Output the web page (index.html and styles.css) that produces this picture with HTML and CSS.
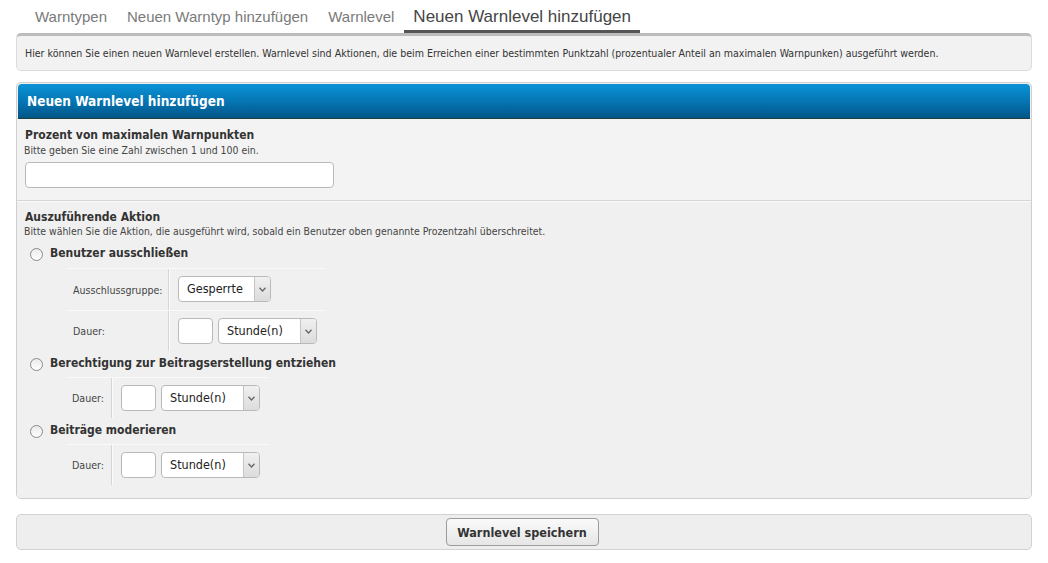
FILE: index.html
```html
<!DOCTYPE html>
<html lang="de">
<head>
<meta charset="utf-8">
<title>Neuen Warnlevel hinzufügen</title>
<link rel="stylesheet" href="styles.css">
</head>
<body>
<div class="page">
  <nav class="tabs">
    <a class="tab">Warntypen</a>
    <a class="tab">Neuen Warntyp hinzufügen</a>
    <a class="tab">Warnlevel</a>
    <a class="tab active">Neuen Warnlevel hinzufügen</a>
  </nav>
  <div class="info">Hier können Sie einen neuen Warnlevel erstellen. Warnlevel sind Aktionen, die beim Erreichen einer bestimmten Punktzahl (prozentualer Anteil an maximalen Warnpunken) ausgeführt werden.</div>

  <div class="container">
    <div class="head">Neuen Warnlevel hinzufügen</div>
    <div class="section first">
      <div class="title">Prozent von maximalen Warnpunkten</div>
      <div class="desc">Bitte geben Sie eine Zahl zwischen 1 und 100 ein.</div>
      <div class="textinput wide"></div>
    </div>
    <div class="section second">
      <div class="title">Auszuführende Aktion</div>
      <div class="desc">Bitte wählen Sie die Aktion, die ausgeführt wird, sobald ein Benutzer oben genannte Prozentzahl überschreitet.</div>

      <div class="option"><span class="radio"></span><span class="olabel">Benutzer ausschließen</span></div>
      <div class="sub t1">
        <div class="row">
          <div class="lcell">Ausschlussgruppe:</div>
          <div class="ccell"><div class="select s-gr"><span class="val">Gesperrte</span><span class="arrow"><svg width="7" height="5" viewBox="0 0 7 5"><path d="M0.5 0.8 L3.5 4 L6.5 0.8" fill="none" stroke="#666" stroke-width="1.3"/></svg></span></div></div>
        </div>
        <div class="row">
          <div class="lcell">Dauer:</div>
          <div class="ccell"><div class="textinput small"></div><div class="select s-st"><span class="val">Stunde(n)</span><span class="arrow"><svg width="7" height="5" viewBox="0 0 7 5"><path d="M0.5 0.8 L3.5 4 L6.5 0.8" fill="none" stroke="#666" stroke-width="1.3"/></svg></span></div></div>
        </div>
      </div>

      <div class="option"><span class="radio"></span><span class="olabel">Berechtigung zur Beitragserstellung entziehen</span></div>
      <div class="sub t2">
        <div class="row">
          <div class="lcell r">Dauer:</div>
          <div class="ccell"><div class="textinput small"></div><div class="select s-st"><span class="val">Stunde(n)</span><span class="arrow"><svg width="7" height="5" viewBox="0 0 7 5"><path d="M0.5 0.8 L3.5 4 L6.5 0.8" fill="none" stroke="#666" stroke-width="1.3"/></svg></span></div></div>
        </div>
      </div>

      <div class="option"><span class="radio"></span><span class="olabel">Beiträge moderieren</span></div>
      <div class="sub t2">
        <div class="row">
          <div class="lcell r">Dauer:</div>
          <div class="ccell"><div class="textinput small"></div><div class="select s-st"><span class="val">Stunde(n)</span><span class="arrow"><svg width="7" height="5" viewBox="0 0 7 5"><path d="M0.5 0.8 L3.5 4 L6.5 0.8" fill="none" stroke="#666" stroke-width="1.3"/></svg></span></div></div>
        </div>
      </div>
    </div>
  </div>

  <div class="submitbar">
    <button class="button">Warnlevel speichern</button>
  </div>
</div>
</body>
</html>
```
FILE: styles.css
```css
html, body {
  margin: 0;
  padding: 0;
  background: #fff;
}
body {
  font-family: "DejaVu Sans Condensed", "DejaVu Sans", sans-serif;
  color: #333;
}
.page {
  padding: 0 16px;
}
.tabs {
  display: flex;
  padding-left: 9px;
  height: 33px;
  align-items: flex-start;
  position: relative;
  z-index: 1;
}
.tab {
  font-family: "Liberation Sans", sans-serif;
  font-size: 15px;
  color: #7a7a7a;
  padding: 8px 10px 0;
  height: 25px;
  line-height: 18px;
}
.tab.active {
  font-size: 17px;
  color: #454545;
  padding: 7px 9px 0;
  height: 23px;
  line-height: 20px;
  border-bottom: 3px solid #555;
}
.info {
  background: #f2f2f2;
  border: 1px solid #dcdcdc;
  border-top: 3px solid #bcbcbc;
  border-radius: 5px;
  height: 34px;
  line-height: 35px;
  padding: 0 8px;
  font-size: 10.55px;
  color: #333;
}
.container {
  margin-top: 11px;
  border: 1px solid #cfcfcf;
  border-radius: 5px;
  background: #f0f0f0;
  overflow: hidden;
}
.head {
  margin: 1px 1px 0;
  height: 34px;
  line-height: 34px;
  padding-left: 9px;
  border-radius: 4px 4px 0 0;
  background: linear-gradient(#0a93d8, #0576b4 50%, #025688);
  border-bottom: 1px solid #1f3d3a;
  color: #fff;
  font-family: "DejaVu Sans Condensed", "DejaVu Sans", sans-serif;
  font-weight: bold;
  font-size: 13.5px;
}
.section {
  padding: 0 8px;
}
.section.first {
  background: #f3f3f3;
  padding-top: 8px;
  padding-bottom: 12px;
  border-bottom: 1px solid #d6d6d6;
}
.section.second {
  background: #f0f0f0;
  padding-top: 7px;
  padding-bottom: 13px;
  border-top: 1px solid #fbfbfb;
}
.title {
  font-family: "DejaVu Sans Condensed", "DejaVu Sans", sans-serif;
  font-weight: bold;
  font-size: 12px;
  line-height: 16px;
  color: #333;
}
.desc {
  font-size: 10.4px;
  line-height: 14px;
  color: #444;
  margin-left: -1px;
}
.second .desc {
  line-height: 13px;
}
.textinput {
  background: #fff;
  border: 1px solid #b9b9b9;
  border-radius: 4px;
  box-sizing: border-box;
  height: 26px;
}
.textinput.wide {
  width: 309px;
  margin-top: 5px;
}
.textinput.small {
  width: 35px;
}
.option {
  display: flex;
  align-items: center;
  height: 18px;
  margin-top: 3px;
  padding-left: 5px;
}
.desc + .option {
  margin-top: 6px;
}
.radio {
  width: 11px;
  height: 11px;
  border: 1px solid #8a8a8a;
  border-radius: 50%;
  background: linear-gradient(#eaeaea, #fff);
  margin-right: 7px;
  margin-top: 3px;
}
.olabel {
  font-family: "DejaVu Sans Condensed", "DejaVu Sans", sans-serif;
  font-weight: bold;
  font-size: 12px;
  color: #333;
}
.sub {
  margin-top: 5px;
  margin-left: 42px;
}
.sub.t1 { width: 258px; margin-top: 6px; }
.sub.t2 { width: 201px; }
.row {
  display: flex;
  border-top: 1px solid #fafafa;
}
.lcell {
  font-size: 10.6px;
  color: #444;
  display: flex;
  align-items: center;
  padding-left: 6px;
  box-sizing: border-box;
  border-right: 1px solid #d5d5d5;
  box-shadow: 1px 0 0 #fbfbfb;
}
.t1 .lcell { width: 102px; }
.t2 .lcell { width: 45px; padding-left: 0; padding-right: 7px; justify-content: flex-end; }
.ccell {
  flex: 1;
  display: flex;
  gap: 5px;
  padding: 7px 0 7px 8px;
  margin-left: 1px;
}
.t1 .row:first-child .ccell { padding-bottom: 8px; }
.select {
  display: flex;
  height: 26px;
  box-sizing: border-box;
  border: 1px solid #b9b9b9;
  border-radius: 4px;
  background: #fff;
  overflow: hidden;
}
.select .val {
  flex: 1;
  font-family: "DejaVu Sans Condensed", "DejaVu Sans", sans-serif;
  font-size: 12.5px;
  line-height: 24px;
  padding-left: 8px;
  color: #222;
}
.select .arrow {
  width: 15px;
  border-left: 1px solid #c4c4c4;
  background: linear-gradient(#f0f0f0, #dcdcdc);
  display: flex;
  align-items: center;
  justify-content: center;
}
.s-gr { width: 93px; }
.s-st { width: 99px; }
.submitbar {
  margin-top: 15px;
  border: 1px solid #d2d2d2;
  border-radius: 5px;
  background: #eeeeee;
  height: 34px;
  display: flex;
  align-items: center;
  justify-content: center;
}
.button {
  font-family: "DejaVu Sans Condensed", "DejaVu Sans", sans-serif;
  font-weight: bold;
  font-size: 12.5px;
  color: #333;
  background: linear-gradient(#fafafa, #e6e6e6);
  border: 1px solid #9c9c9c;
  border-radius: 4px;
  height: 28px;
  width: 153px;
  padding: 0;
  margin-left: -4px;
}
```
